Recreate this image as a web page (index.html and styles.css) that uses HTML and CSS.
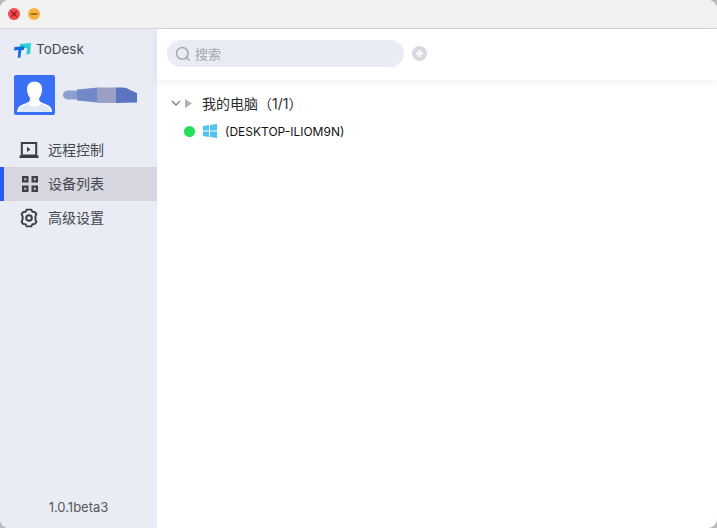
FILE: index.html
```html
<!DOCTYPE html>
<html lang="zh">
<head>
<meta charset="utf-8">
<title>ToDesk</title>
<link rel="stylesheet" href="styles.css">
</head>
<body>
<div class="window">
  <header class="titlebar">
    <span class="light light-close"><svg viewBox="0 0 12 12" width="12" height="12"><path d="M3.400 3.400l5.200 5.200M8.600 3.400l-5.200 5.200" stroke="#8a1c1c" stroke-width="1.300" fill="none"/></svg></span>
    <span class="light light-min"><svg viewBox="0 0 12 12" width="12" height="12"><path d="M2.600 6h6.800" stroke="#8f5a10" stroke-width="1.400" fill="none"/></svg></span>
  </header>
  <div class="body">
    <aside class="sidebar">
      <div class="brand">
        <svg class="brand-logo" viewBox="0 0 17 15" width="17" height="15">
          <path d="M6 1L17 0l-.8 10.800-3.700.9L13 5 5.500 5.600z" fill="#2bd2d4"/>
          <path d="M0.500 4L10.500 3.200 9.800 7l-2.600.2L6.500 14.500 3.800 15l.6-8L0 7.400z" fill="#0e6de6"/>
        </svg>
        <span class="brand-name">ToDesk</span>
      </div>
      <div class="profile">
        <div class="avatar">
          <svg viewBox="0 0 41 40" width="41" height="40">
            <path d="M20.500 6.500c-5.300 0-7.600 3.800-7.400 8.200.1 2.800 1 5.400 2.300 7.400.9 1.300 1 3.200-.3 4.300-2 1.700-8.600 3.100-10.600 6-.9 1.400-1.300 3.300-1.400 4.600h35c-.1-1.300-.5-3.200-1.400-4.600-2-2.900-8.600-4.300-10.600-6-1.300-1.100-1.200-3-.3-4.300 1.300-2 2.200-4.600 2.300-7.400.2-4.400-2.100-8.200-7.600-8.200z" fill="#fff"/>
            <path d="M13.500 28.500c2.500 2.200 4.800 3.300 7 3.300s4.500-1.100 7-3.300l8 4.500c1 1 1.500 3 1.500 4H4.500c0-1 .5-3 1.500-4z" fill="#dfe8f7"/>
          </svg>
        </div>
        <svg class="smear" viewBox="0 0 76 17" width="76" height="17">
          <path d="M7 3.500C3 3.500 1 5.500 1 8s2 4.500 6 4.500h8V3.500z" fill="#8c9fd0"/>
          <path d="M15 2.500L36 .5v15l-21-2z" fill="#7189c8"/>
          <path d="M35 .5h20v15.500H35z" fill="#9a9fc6"/>
          <path d="M54 0.500h7c4 0 7 3 14 5.500v9.500L54 16z" fill="#5a74c2"/>
        </svg>
      </div>
      <nav class="nav">
        <a class="nav-item">
          <svg class="nav-icon" viewBox="0 0 20 18" width="20" height="18">
            <path d="M2.800 2h14.400v12.500H2.800z" fill="none" stroke="#3d3f45" stroke-width="2"/>
            <path d="M0.500 14.500h19v2.500h-19z" fill="#3d3f45"/>
            <path d="M8 5.800l3.500 2.600L8 11z" fill="#3d3f45"/>
          </svg>
          <span class="nav-label">远程控制</span>
        </a>
        <a class="nav-item is-active">
          <svg class="nav-icon" viewBox="0 0 18 18" width="18" height="18">
            <path d="M1 1h6.500v6.500H1zM10.500 1H17v6.500h-6.500zM1 10.500h6.500V17H1zM10.500 10.500H17V17h-6.500z" fill="#3d3f45"/>
            <path d="M3.300 3.300h1.900v1.900H3.300zM12.800 3.300h1.900v1.900h-1.900zM3.300 12.800h1.900v1.900H3.300zM12.800 12.800h1.900v1.900h-1.900z" fill="#d5d7e0"/>
          </svg>
          <span class="nav-label">设备列表</span>
        </a>
        <a class="nav-item">
          <svg class="nav-icon" viewBox="0 0 20 20" width="20" height="20">
            <path d="M7.600 1.600h4.800l1 2.200 2.500.3 1.500 2-1 2.300v3.200l1 2.300-1.500 2-2.500.3-1 2.200H7.600l-1-2.200-2.500-.3-1.500-2 1-2.300V8.400l-1-2.300 1.500-2 2.500-.3z" fill="none" stroke="#3d3f45" stroke-width="1.900" stroke-linejoin="round"/>
            <circle cx="10" cy="10" r="2.800" fill="none" stroke="#3d3f45" stroke-width="2"/>
          </svg>
          <span class="nav-label">高级设置</span>
        </a>
      </nav>
      <div class="version">1.0.1beta3</div>
    </aside>
    <main class="main">
      <div class="toolbar">
        <div class="search">
          <svg viewBox="0 0 16 16" width="16" height="16">
            <circle cx="7.300" cy="7.300" r="5.800" fill="none" stroke="#9fa3ab" stroke-width="1.400"/>
            <path d="M11.500 11.500l3 3" stroke="#9fa3ab" stroke-width="1.400" fill="none"/>
          </svg>
          <span>搜索</span>
        </div>
        <svg class="add" viewBox="0 0 15 15" width="15" height="15">
          <circle cx="7.500" cy="7.500" r="7.500" fill="#d8d9e1"/>
          <path d="M7.500 4v7M4 7.500h7" stroke="#fff" stroke-width="2"/>
        </svg>
      </div>
      <div class="tree">
        <div class="group">
          <svg class="chev" viewBox="0 0 10 6" width="10" height="6"><path d="M1 1l4 4 4-4" fill="none" stroke="#808288" stroke-width="1.300"/></svg>
          <svg class="caret" viewBox="0 0 7 9" width="7" height="9"><path d="M0 0l7 4.500L0 9z" fill="#b2b3b7"/></svg>
          <span class="group-name">我的电脑（1/1）</span>
        </div>
        <div class="device">
          <span class="dot"></span>
          <svg class="win" viewBox="0 0 14 14" width="14" height="14">
            <path d="M0 2l6-.9v5.400H0zM7 .9L14 0v6.500H7zM0 7.500h6v5.400L0 12zM7 7.500h7V14l-7-.9z" fill="#4fc3f2"/>
          </svg>
          <span class="device-name">(DESKTOP-ILIOM9N)</span>
        </div>
      </div>
    </main>
  </div>
</div>
</body>
</html>
```

FILE: styles.css
```css
html, body {
  margin: 0;
  height: 100%;
  background: #b9b9b9;
}
body {
  font-family: "Inter", "Noto Sans CJK SC", sans-serif;
  overflow: hidden;
}
.window {
  width: 717px;
  height: 528px;
  border-radius: 9px;
  overflow: hidden;
  display: flex;
  flex-direction: column;
  background: #fff;
}
.titlebar {
  height: 28px;
  flex: none;
  display: flex;
  align-items: center;
  gap: 8px;
  padding-left: 8px;
  background: #f3f2f2;
  border-bottom: 1px solid #d6d6d6;
}
.light {
  width: 12px;
  height: 12px;
  border-radius: 50%;
  display: block;
}
.light svg { display: block; }
.light-close { background: #f3484e; }
.light-min { background: #f7b23c; }
.body {
  flex: 1;
  display: flex;
  min-height: 0;
}
.sidebar {
  width: 157px;
  flex: none;
  background: #e9ecf5;
  display: flex;
  flex-direction: column;
}
.brand {
  display: flex;
  align-items: center;
  gap: 5px;
  height: 18px;
  margin: 12px 0 0 14px;
}
.brand-name {
  font-size: 13.500px;
  color: #44464c;
  line-height: 16px;
  margin-bottom: 2px;
}
.profile {
  display: flex;
  align-items: center;
  gap: 7px;
  margin: 16px 0 0 14px;
}
.avatar {
  width: 41px;
  height: 40px;
  border-radius: 2px;
  background: #3b6ff5;
  overflow: hidden;
}
.avatar svg, .brand-logo { display: block; }
.nav {
  margin-top: 18px;
  display: flex;
  flex-direction: column;
}
.nav-item {
  height: 34px;
  display: flex;
  align-items: center;
  font-size: 14px;
  color: #44464c;
  padding-left: 19px;
  box-sizing: border-box;
}
.nav-icon {
  flex: none;
  margin-right: 9px;
}
.nav-label {
  margin-bottom: 2px;
}
.nav-item.is-active {
  background: #d5d6df;
  box-shadow: inset 4px 0 0 #2a5cf5;
  padding-left: 21px;
}
.version {
  margin-top: auto;
  height: 29px;
  font-size: 13px;
  color: #55575d;
  text-align: center;
}
.main {
  flex: 1;
  display: flex;
  flex-direction: column;
  min-width: 0;
}
.toolbar {
  height: 51px;
  flex: none;
  box-sizing: border-box;
  display: flex;
  align-items: center;
  gap: 8px;
  padding: 0 0 2px 10px;
  box-shadow: 0 2px 8px rgba(40, 45, 70, 0.07);
}
.search {
  width: 237px;
  height: 27px;
  border-radius: 14px;
  background: #e9ecf5;
  display: flex;
  align-items: center;
  gap: 4px;
  padding-left: 8px;
  box-sizing: border-box;
  font-size: 13px;
  color: #a5a7ae;
}
.tree {
  padding: 13px 0 0 14px;
}
.group {
  height: 20px;
  display: flex;
  align-items: center;
}
.chev { margin-right: 4px; }
.caret { margin-right: 10px; }
.group-name {
  font-size: 14px;
  color: #2c2d31;
}
.device {
  height: 24px;
  margin-top: 6px;
  display: flex;
  align-items: center;
  padding-left: 13px;
}
.dot {
  width: 11px;
  height: 11px;
  border-radius: 50%;
  background: #22e05a;
  margin-right: 8px;
}
.win { margin-right: 8px; }
.device-name {
  font-size: 12px;
  color: #111114;
}
```
